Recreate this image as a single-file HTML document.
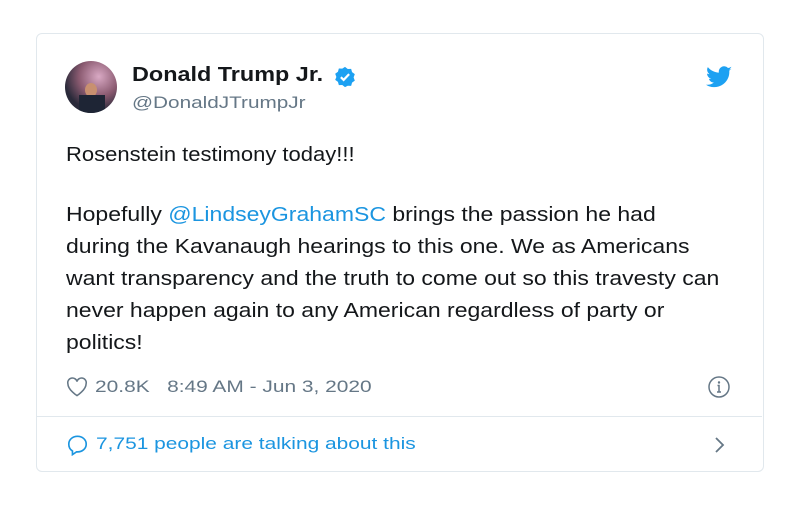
<!DOCTYPE html><html><head><style>
body{margin:0;width:799px;height:513px;background:#fff;font-family:"Liberation Sans",sans-serif;position:relative;overflow:hidden}
.card{position:absolute;left:36px;top:33px;width:726px;height:437px;border:1px solid #e1e8ed;border-radius:6px}
.a{position:absolute;transform-origin:0 0;white-space:nowrap}
.t{font-size:20px;color:#14171a;line-height:32px;transform:scaleX(1.15)}
a{color:#1b95e0;text-decoration:none}
</style></head><body>
<div class="card"></div>
<div class="a" style="left:65px;top:61px;width:52px;height:52px;border-radius:50%;background:radial-gradient(circle at 65% 30%,#d9a9c4,#8a5a70 40%,#2a2a3a 70%);overflow:hidden"><div style="position:absolute;left:20px;top:22px;width:12px;height:14px;background:#c89070;border-radius:50%"></div><div style="position:absolute;left:14px;top:34px;width:26px;height:20px;background:#1e2535"></div></div>
<div class="a" style="left:132px;top:64px;font-size:20px;font-weight:bold;color:#14171a;transform:scaleX(1.17)">Donald Trump Jr.</div>
<svg class="a" style="left:334px;top:66px" width="22" height="22" viewBox="0 0 24 24"><path fill="#1da1f2" d="M12 1l3 2.3 3.7-.2 1 3.6 3 2.2-1.3 3.5 1.3 3.5-3 2.2-1 3.6-3.7-.2L12 23l-3-2.3-3.7.2-1-3.6-3-2.2L2.6 12 1.3 8.5l3-2.2 1-3.6 3.7.2z"/><path d="M7.5 12.2l3 3 6-6.4" stroke="#fff" stroke-width="2.4" fill="none"/></svg>
<div class="a" style="left:132px;top:93px;font-size:17px;color:#657786;transform:scaleX(1.22)">@DonaldJTrumpJr</div>
<svg class="a" style="left:706px;top:66px" width="26" height="22" viewBox="0 0 24 20"><path fill="#1da1f2" d="M24 2.4c-.9.4-1.8.7-2.8.8 1-.6 1.8-1.6 2.2-2.7-1 .6-2 1-3.1 1.2A4.9 4.9 0 0 0 11.9 6C7.8 5.8 4.2 3.9 1.7.9c-1.3 2.3-.6 5 1.5 6.5-.8 0-1.6-.2-2.2-.6 0 2.4 1.7 4.4 3.9 4.8-.7.2-1.5.2-2.2.1.6 2 2.4 3.4 4.6 3.4A9.9 9.9 0 0 1 0 17.1 13.9 13.9 0 0 0 21.5 4.7V4.1c1-.7 1.8-1.6 2.5-1.7z"/></svg>
<div class="a t" style="left:66px;top:139px;transform:scaleX(1.1)">Rosenstein testimony today!!!</div>
<div class="a t" style="left:66px;top:199px">Hopefully <a>@LindseyGrahamSC</a> brings the passion he had<br>during the Kavanaugh hearings to this one. We as Americans<br>want transparency and the truth to come out so this travesty can<br>never happen again to any American regardless of party or<br>politics!</div>
<svg class="a" style="left:66px;top:377px" width="22" height="20" viewBox="0 0 24 22"><path d="M12 20.5S2 14 2 7.5A5 5 0 0 1 12 5a5 5 0 0 1 10 2.5C22 14 12 20.5 12 20.5z" fill="none" stroke="#657786" stroke-width="1.7"/></svg>
<div class="a" style="left:95px;top:377px;font-size:17px;color:#657786;transform:scaleX(1.23)">20.8K &nbsp; 8:49 AM - Jun 3, 2020</div>
<svg class="a" style="left:707px;top:375px" width="24" height="24" viewBox="0 0 24 24"><circle cx="12" cy="12" r="10" fill="none" stroke="#657786" stroke-width="1.5"/><circle cx="12" cy="7.5" r="1.2" fill="#657786"/><path d="M10.5 10.5h1.5v6.5M10 17h4" stroke="#657786" stroke-width="1.5" fill="none"/></svg>
<div class="a" style="left:37px;top:416px;width:725px;height:1px;background:#e1e8ed"></div>
<svg class="a" style="left:66px;top:434px" width="23" height="22" viewBox="0 0 24 24"><path d="M12 2.5c5.5 0 9.5 3.8 9.5 8.5S17.5 19.5 12 19.5H11l-4.5 3v-4C4 17 2.5 14.2 2.5 11 2.5 6.3 6.5 2.5 12 2.5z" fill="none" stroke="#1b95e0" stroke-width="1.8"/></svg>
<div class="a" style="left:96px;top:434px;font-size:17px;color:#1b95e0;transform:scaleX(1.23)">7,751 people are talking about this</div>
<svg class="a" style="left:713px;top:436px" width="14" height="18" viewBox="0 0 14 18"><path d="M3 2l7 7-7 7" fill="none" stroke="#657786" stroke-width="1.8"/></svg>
</body></html>
